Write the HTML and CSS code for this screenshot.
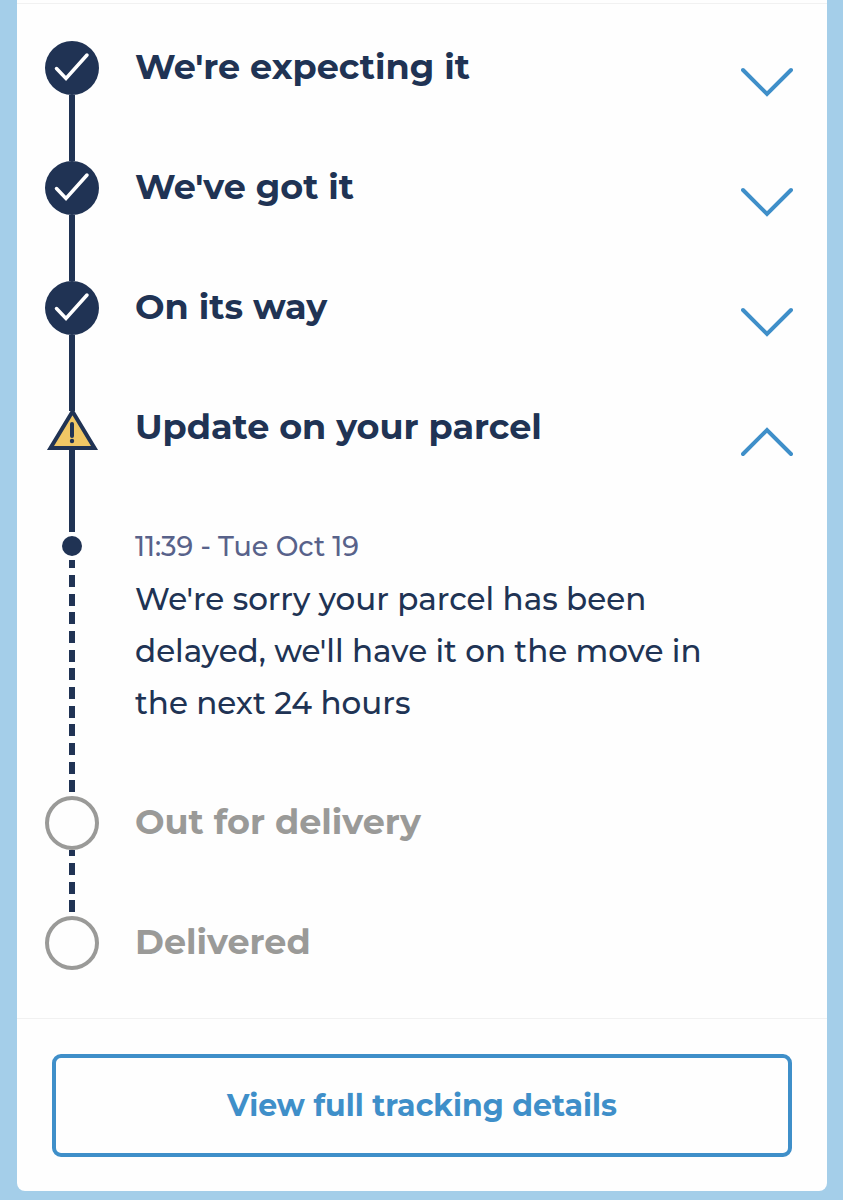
FILE: index.html
```html
<!DOCTYPE html>
<html lang="en">
<head>
    <meta charset="UTF-8">
    <meta name="viewport" content="width=device-width, initial-scale=1.0">
    <title>Parcel Tracking</title>
    <link rel="stylesheet" href="styles.css">
</head>
<body>
    <main class="card">
        <ol class="steps">
            <li class="step">
                <div class="rail">
                    <svg class="marker" viewBox="0 0 54 54" aria-hidden="true">
                        <circle cx="27" cy="27" r="27" fill="#203354"/>
                        <path d="M11.500 27.500L21 37.500 42 14" fill="none" stroke="#fff" stroke-width="3.500" stroke-linecap="round"/>
                    </svg>
                    <span class="line"></span>
                </div>
                <button type="button" class="step-toggle" aria-expanded="false">
                    <span class="step-title">We're expecting it</span>
                    <svg class="chevron" viewBox="0 0 52 30" aria-hidden="true"><path d="M2 3l24 24L50 3"/></svg>
                </button>
            </li>
            <li class="step">
                <div class="rail">
                    <svg class="marker" viewBox="0 0 54 54" aria-hidden="true">
                        <circle cx="27" cy="27" r="27" fill="#203354"/>
                        <path d="M11.500 27.500L21 37.500 42 14" fill="none" stroke="#fff" stroke-width="3.500" stroke-linecap="round"/>
                    </svg>
                    <span class="line"></span>
                </div>
                <button type="button" class="step-toggle" aria-expanded="false">
                    <span class="step-title">We've got it</span>
                    <svg class="chevron" viewBox="0 0 52 30" aria-hidden="true"><path d="M2 3l24 24L50 3"/></svg>
                </button>
            </li>
            <li class="step">
                <div class="rail">
                    <svg class="marker" viewBox="0 0 54 54" aria-hidden="true">
                        <circle cx="27" cy="27" r="27" fill="#203354"/>
                        <path d="M11.500 27.500L21 37.500 42 14" fill="none" stroke="#fff" stroke-width="3.500" stroke-linecap="round"/>
                    </svg>
                    <span class="line"></span>
                </div>
                <button type="button" class="step-toggle" aria-expanded="false">
                    <span class="step-title">On its way</span>
                    <svg class="chevron" viewBox="0 0 52 30" aria-hidden="true"><path d="M2 3l24 24L50 3"/></svg>
                </button>
            </li>
            <li class="step">
                <div class="rail">
                    <svg class="marker" viewBox="0 0 54 54" aria-hidden="true">
                        <path d="M24 0h6v10h-6zM24 46h6v8h-6z" fill="#203354"/>
                        <path d="M27.500 10.500L49.500 47H5.500z" fill="#f0c765" stroke="#203354" stroke-width="4"/>
                        <path d="M27 23v12" stroke="#203354" stroke-width="4" stroke-linecap="round"/>
                        <circle cx="27" cy="40" r="2.200" fill="#203354"/>
                    </svg>
                    <span class="line"></span>
                </div>
                <button type="button" class="step-toggle" aria-expanded="true" aria-controls="update">
                    <span class="step-title">Update on your parcel</span>
                    <svg class="chevron" viewBox="0 0 52 30" aria-hidden="true"><path d="M2 27L26 3l24 24"/></svg>
                </button>
            </li>
            <li class="step event" id="update">
                <div class="rail">
                    <span class="line short"></span>
                    <span class="dot"></span>
                    <span class="line dashed"></span>
                </div>
                <div class="event-text">
                    <time class="event-time">11:39 - Tue Oct 19</time>
                    <p>We're sorry your parcel has been delayed, we'll have it on the move in the next 24 hours</p>
                </div>
            </li>
            <li class="step pending">
                <div class="rail">
                    <span class="marker empty"></span>
                    <span class="line dashed"></span>
                </div>
                <span class="step-title">Out for delivery</span>
            </li>
            <li class="step pending">
                <div class="rail">
                    <span class="marker empty"></span>
                </div>
                <span class="step-title">Delivered</span>
            </li>
        </ol>
        <div class="actions">
            <button type="button" class="details-button">View full tracking details</button>
        </div>
    </main>
</body>
</html>
```

FILE: styles.css
```css
* {
    box-sizing: border-box;
}
body {
    margin: 0;
    padding: 0 16px 9px 17px;
    background-color: #a4cee9;
    font-family: Montserrat, Inter, "Open Sans", sans-serif;
    font-weight: 500;
    color: #203354;
}
.card {
    padding-top: 3px;
    background-color: #fefefe;
    border-radius: 0 0 8px 8px;
}
.steps {
    margin: 0;
    padding: 37px 34px 48px 28px;
    border-top: 1px solid #f1f1f1;
    list-style: none;
}
.step {
    display: grid;
    grid-template-columns: 54px 1fr;
    column-gap: 36px;
    min-height: 120px;
}
.step:last-child {
    min-height: 54px;
}
.rail {
    display: flex;
    flex-direction: column;
    align-items: center;
}
.marker {
    display: block;
    width: 54px;
    height: 54px;
    flex: none;
}
.empty {
    border: 4px solid #9a9a98;
    border-radius: 50%;
}
.line {
    width: 6px;
    flex: 1;
    background-color: #203354;
}
.line.short {
    flex: none;
    height: 11px;
}
.line.dashed {
    margin-bottom: 4px;
    background: repeating-linear-gradient(to top,
        #203354 0 12px, transparent 12px 18px,
        #203354 18px 30px, transparent 30px 37px,
        #203354 37px 49px, transparent 49px 56px);
}
.dot {
    width: 20px;
    height: 20px;
    margin: 4px 0;
    border-radius: 50%;
    background-color: #203354;
}
.step-toggle {
    display: flex;
    justify-content: space-between;
    align-items: flex-start;
    align-self: start;
    padding: 0;
    border: none;
    background: none;
    font: inherit;
    color: inherit;
    text-align: left;
    cursor: pointer;
}
.step-title {
    font-size: 35px;
    font-weight: 700;
    line-height: 52px;
}
.pending .step-title {
    color: #9a9a98;
}
.chevron {
    width: 52px;
    height: 30px;
    margin-top: 26px;
    flex: none;
    fill: none;
    stroke: #3f8fc9;
    stroke-width: 4;
    stroke-linecap: round;
}
.event-text {
    padding: 0 60px 67px 0;
    font-size: 31px;
    line-height: 52px;
}
.event-text p {
    margin: 0;
}
.event-time {
    display: block;
    font-size: 27px;
    color: #58628a;
}
.actions {
    padding: 35px 35px 34px;
    border-top: 1px solid #f1f1f1;
}
.details-button {
    width: 100%;
    padding: 25px;
    border: 4px solid #3f8fc9;
    border-radius: 9px;
    background: none;
    font-family: inherit;
    font-size: 30px;
    font-weight: 700;
    line-height: 45px;
    color: #3f8fc9;
    cursor: pointer;
}
```
